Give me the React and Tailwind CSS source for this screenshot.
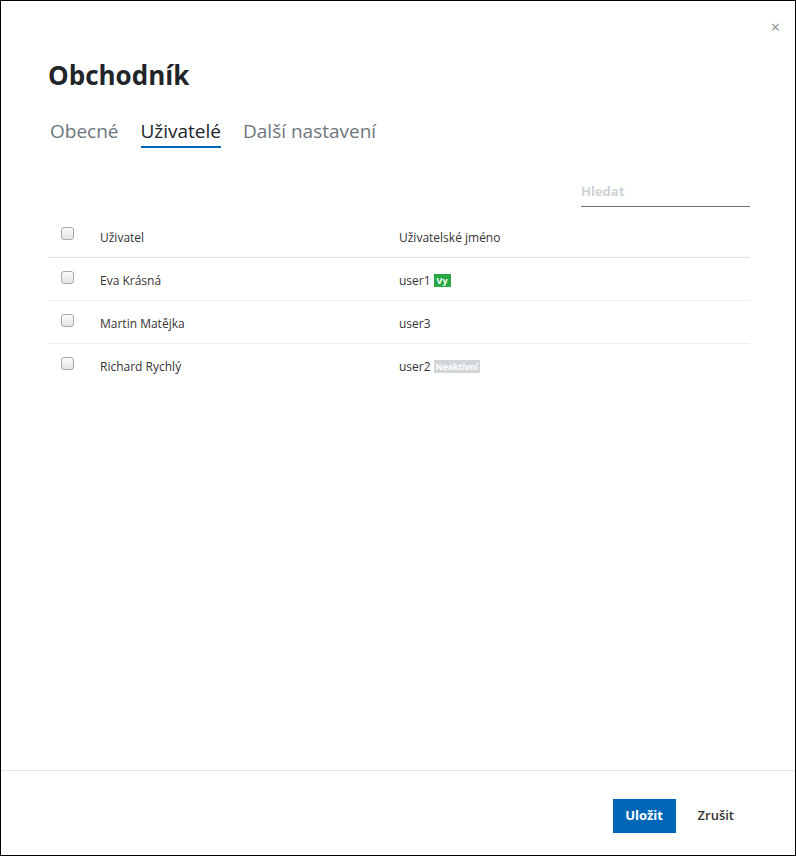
import React from "react";

const users = [
  { name: "Eva Krásná", login: "user1", badge: "vy" },
  { name: "Martin Matějka", login: "user3" },
  { name: "Richard Rychlý", login: "user2", badge: "off" },
];

function Box() {
  return (
    <span className="block w-[13px] h-[13px] rounded-[3px] border border-[#a9a9a9] bg-gradient-to-b from-[#fbfbfb] to-[#e4e4e4]" />
  );
}

export default function App() {
  return (
    <div
      className="w-[796px] h-[856px] border border-black bg-white flex flex-col relative text-[#333]"
      style={{ fontFamily: '"Open Sans", "Noto Sans", Arial, sans-serif' }}
    >
      <button className="absolute right-[15px] top-[18px] text-[16px] leading-none text-[#8a8a8a]">×</button>

      <div className="flex-1 pl-[47px] pr-[45px] pt-[58px]">
        <h1 className="text-[26px] font-bold text-[#212529] leading-[32px]">Obchodník</h1>

        <div className="flex gap-[22px] mt-[27px] pl-[2px] text-[19px] leading-[26px]">
          <span className="text-[#6c757d] pb-[4px]">Obecné</span>
          <span className="text-[#212529] pb-[2px] border-b-2 border-[#0067b8]">Uživatelé</span>
          <span className="text-[#6c757d] pb-[4px]">Další nastavení</span>
        </div>

        <div className="flex justify-end mt-[34px]">
          <div className="w-[169px] border-b border-[#6c757d] pb-[6px] text-[13px] font-bold text-[#cdd2d7] leading-[18px]">
            Hledat
          </div>
        </div>

        <table className="w-full mt-[12px] text-[12px] border-collapse">
          <thead>
            <tr className="border-b border-[#dee2e6] h-[38px]">
              <td className="w-[52px] pl-[13px] align-top pt-[8px]"><Box /></td>
              <td className="w-[299px] align-top pt-[10px]">Uživatel</td>
              <td className="align-top pt-[10px]">Uživatelské jméno</td>
            </tr>
          </thead>
          <tbody>
            {users.map((u) => (
              <tr key={u.login} className="border-b border-[#eceef0] last:border-0 h-[43px]">
                <td className="pl-[13px] align-top pt-[13px]"><Box /></td>
                <td className="align-top pt-[14px]">{u.name}</td>
                <td className="align-top pt-[14px]">
                  <span>{u.login}</span>
                  {u.badge === "vy" && (
                    <span className="ml-[3px] inline-block bg-[#28a745] text-white text-[9px] font-bold px-[3px] leading-[13px] align-[1px]">Vy</span>
                  )}
                  {u.badge === "off" && (
                    <span className="ml-[3px] inline-block bg-[#d3d6d9] text-white text-[9px] font-bold px-[2px] leading-[13px] align-[1px] tracking-[-0.2px]">Neaktivní</span>
                  )}
                </td>
              </tr>
            ))}
          </tbody>
        </table>
      </div>

      <div className="h-[85px] border-t border-[#e2e2e2] flex items-start justify-end pt-[28px] pr-[61px] gap-[22px]">
        <button className="h-[34px] w-[63px] bg-[#0067b8] text-white text-[13px] font-bold">Uložit</button>
        <button className="h-[34px] text-[13px] text-[#333] font-semibold">Zrušit</button>
      </div>
    </div>
  );
}
